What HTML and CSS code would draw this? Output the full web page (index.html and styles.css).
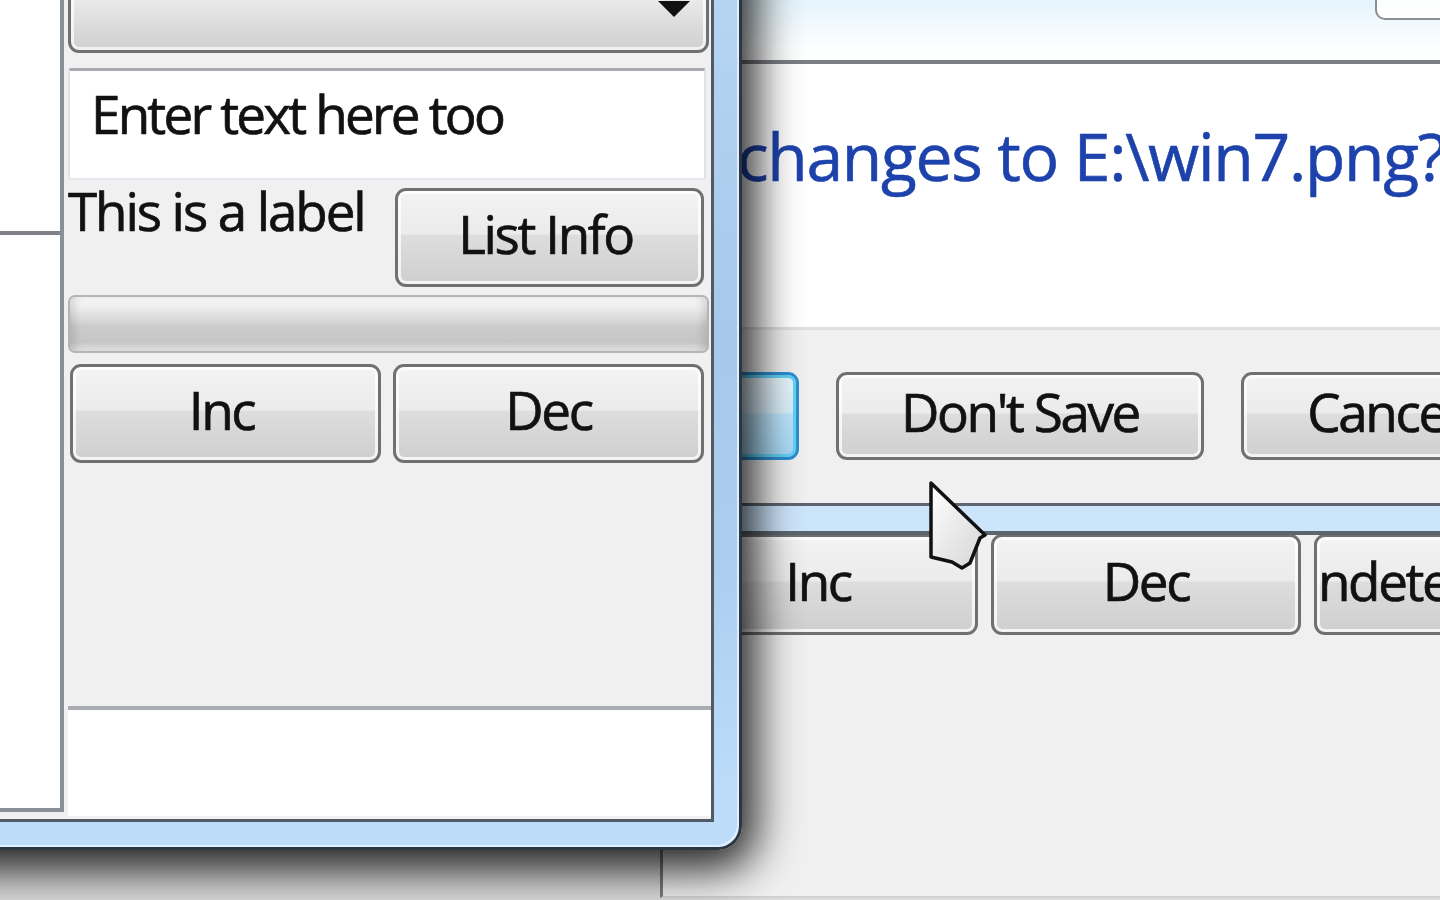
FILE: index.html
```html
<!DOCTYPE html>
<html>
<head>
<meta charset="utf-8">
<link rel="stylesheet" href="styles.css">
</head>
<body>
<div class="desktop">
  <div class="win backwin">
    <div class="btn bw-btn">Inc</div>
    <div class="btn bw-btn">Dec</div>
    <div class="btn bw-btn bw-clip">ndeterminate</div>
  </div>

  <div class="win dialog">
    <div class="dlg-title"><div class="dlg-close"></div></div>
    <div class="dlg-client">
      <div class="dlg-content"><p class="dlg-instr">changes to E:\win7.png?</p></div>
      <div class="dlg-buttons">
        <div class="btn dlg-btn btn-default"></div>
        <div class="btn dlg-btn">Don't Save</div>
        <div class="btn dlg-btn dlg-cancel">Cancel</div>
      </div>
    </div>
  </div>

  <div class="win front">
    <div class="client">
      <div class="side-panel"><div class="side-row"></div></div>
      <div class="main-panel">
        <div class="combo">
          <svg class="combo-arrow" viewBox="0 0 32 16"><polygon points="0,0 32,0 16,16" fill="#111"/></svg>
        </div>
        <div class="entry">Enter text here too</div>
        <div class="label-row">
          <span class="label">This is a label</span>
          <div class="btn">List Info</div>
        </div>
        <div class="progress"></div>
        <div class="btn-row">
          <div class="btn">Inc</div>
          <div class="btn">Dec</div>
        </div>
        <div class="spacer"></div>
        <div class="bottom-box"></div>
      </div>
    </div>
  </div>

  <svg class="cursor" viewBox="0 0 70 100">
    <defs>
      <linearGradient id="cg" x1="0" y1="0" x2="1" y2="1">
        <stop offset="0" stop-color="#ffffff"/>
        <stop offset="1" stop-color="#d4d4d4"/>
      </linearGradient>
    </defs>
    <polygon points="6,5 6,79 27,84 37,90 45,85 55,60 60,57" fill="url(#cg)" stroke="#111" stroke-width="3.5" stroke-linejoin="round"/>
  </svg>
</div>
</body>
</html>
```

FILE: styles.css
```css
html, body {
  margin: 0;
  padding: 0;
}

body {
  width: 1440px;
  height: 900px;
  overflow: hidden;
  background: #dcdcdc;
  font-family: "Open Sans", "Noto Sans", sans-serif;
}

.desktop {
  position: relative;
  width: 1440px;
  height: 900px;
  overflow: hidden;
}

.win {
  position: absolute;
  box-sizing: border-box;
}

/* ---------- generic Win7 push button ---------- */
.btn {
  box-sizing: border-box;
  display: flex;
  align-items: center;
  justify-content: center;
  padding-bottom: 8px;
  border: 3px solid #707070;
  border-radius: 11px;
  background: linear-gradient(#f3f3f3 0%, #ebebeb 46%, #dddddd 48%, #cfcfcf 100%);
  box-shadow: inset 0 0 0 3px rgba(255, 255, 255, 0.75);
  font-size: 53px;
  line-height: 60px;
  letter-spacing: -2.4px;
  color: #111;
  -webkit-text-stroke: 0.7px #111;
  white-space: nowrap;
  flex: none;
}

/* ---------- window behind the dialog ---------- */
.backwin {
  left: 660px;
  top: 440px;
  width: 800px;
  height: 458px;
  background: #f0f0f0;
  border-left: 3px solid #7c7c7c;
  border-bottom: 2px solid #d2d2d2;
  padding: 94px 0 0 5px;
  display: flex;
  align-items: flex-start;
  gap: 13px;
  z-index: 1;
}

.bw-btn {
  width: 310px;
  height: 101px;
}

.backwin .bw-btn:first-child {
  padding-right: 10px;
}

.bw-clip {
  justify-content: flex-start;
  padding-left: 1px;
  overflow: hidden;
}

/* ---------- save dialog ---------- */
.dialog {
  left: 400px;
  top: -60px;
  width: 1100px;
  height: 595px;
  background: #cde5fb;
  border-bottom: 4px solid #5c656e;
  padding-bottom: 25px;
  display: flex;
  flex-direction: column;
  z-index: 2;
}

.dlg-title {
  height: 120px;
  flex: none;
  background: linear-gradient(#d4edf9 0%, #e4f5fc 50%, #f2fafe 72%, #fcfeff 88%, #ffffff 100%);
  display: flex;
  justify-content: flex-end;
  align-items: flex-start;
}

.dlg-close {
  width: 100px;
  height: 80px;
  margin-right: 25px;
  box-sizing: border-box;
  border: 2px solid #8a8f96;
  border-top: none;
  border-radius: 0 0 10px 10px;
  background: linear-gradient(#f2f8fb, #ffffff);
}

.dlg-client {
  flex: 1;
  display: flex;
  flex-direction: column;
  border-top: 4px solid #7b7e82;
  border-bottom: 3px solid #5d6670;
  background: #f0f0f0;
}

.dlg-content {
  height: 263px;
  flex: none;
  box-sizing: border-box;
  background: #ffffff;
  padding: 51px 0 0 337px;
}

.dlg-instr {
  margin: 0;
  font-size: 66px;
  line-height: 80px;
  letter-spacing: -1.3px;
  color: #1d42ab;
  -webkit-text-stroke: 0.6px #1d42ab;
  white-space: nowrap;
}

.dlg-buttons {
  flex: 1;
  border-top: 3px solid #dfdfdf;
  padding: 42px 0 0 31px;
  display: flex;
  align-items: flex-start;
  gap: 37px;
}

.dlg-btn {
  width: 368px;
  height: 88px;
}

.dlg-cancel {
  width: 282px;
}

.btn-default {
  border-color: #2c8ed0;
  box-shadow: inset 0 0 0 3px #63d2f7;
  background: linear-gradient(#eaf6fd 0%, #d9f0fc 46%, #bee6fd 48%, #a7d9f5 100%);
}

/* ---------- front window ---------- */
.front {
  left: -40px;
  top: -70px;
  width: 782px;
  height: 920px;
  background: linear-gradient(#b8d7f4 0%, #a6c8ea 45%, #abcdee 68%, #bcdcfa 94%);
  border-right: 3px solid #2c3744;
  border-bottom: 3px solid #2c3744;
  border-bottom-right-radius: 24px;
  padding: 0 25px 25px 0;
  box-shadow: 0 6px 44px 14px rgba(0, 0, 0, 0.85), inset -2px -2px 0 #e0efff;
  z-index: 3;
}

.client {
  width: 754px;
  height: 892px;
  box-sizing: border-box;
  border-right: 3px solid #4f5b67;
  border-bottom: 3px solid #4f5b67;
  background: #f0f0f0;
  display: flex;
  align-items: flex-start;
}

.side-panel {
  width: 104px;
  height: 882px;
  flex: none;
  box-sizing: border-box;
  background: #ffffff;
  border-right: 4px solid #8a9098;
  border-bottom: 4px solid #8a9098;
}

.side-row {
  height: 305px;
  box-sizing: border-box;
  border-bottom: 4px solid #7e8288;
}

.main-panel {
  flex: 1;
  height: 889px;
  display: flex;
  flex-direction: column;
  padding-left: 4px;
}

.combo {
  margin-top: 22px;
  width: 641px;
  height: 101px;
  flex: none;
  box-sizing: border-box;
  border: 3px solid #707070;
  border-radius: 11px;
  background: linear-gradient(#f3f3f3 0%, #ebebeb 45%, #e2e2e2 62%, #d6d6d6 85%, #d0d0d0 100%);
  box-shadow: inset 0 0 0 3px rgba(255, 255, 255, 0.7);
  display: flex;
  justify-content: flex-end;
  align-items: flex-start;
}

.combo-arrow {
  margin-top: 46px;
  margin-right: 16px;
  width: 32px;
  height: 16px;
}

.entry {
  margin-top: 15px;
  width: 638px;
  height: 112px;
  flex: none;
  box-sizing: border-box;
  background: #ffffff;
  border: 2px solid #dfe3e8;
  border-top: 3px solid #a7abb1;
  border-bottom-color: #e3e9ef;
  border-radius: 3px;
  padding: 13px 0 0 21px;
  font-size: 53px;
  line-height: 60px;
  letter-spacing: -2.8px;
  color: #111;
  -webkit-text-stroke: 0.7px #111;
  white-space: nowrap;
}

.label-row {
  margin-top: 8px;
  height: 99px;
  flex: none;
  display: flex;
  justify-content: space-between;
  align-items: flex-start;
}

.label {
  margin-top: -7px;
  font-size: 53px;
  line-height: 60px;
  letter-spacing: -2.1px;
  color: #111;
  -webkit-text-stroke: 0.7px #111;
  white-space: nowrap;
}

.label-row .btn {
  width: 309px;
  height: 99px;
  margin-right: 7px;
  padding-right: 8px;
}

.progress {
  margin-top: 8px;
  width: 641px;
  height: 58px;
  flex: none;
  box-sizing: border-box;
  border: 2px solid #b4b4b4;
  border-radius: 7px;
  background: linear-gradient(#f7f7f7 0%, #ededed 20%, #dbdbdb 40%, #cbcbcb 55%, #c6c6c6 84%, #e4e4e4 100%);
  box-shadow: inset 8px 0 8px -4px rgba(0, 0, 0, 0.12), inset -8px 0 8px -4px rgba(0, 0, 0, 0.12);
}

.btn-row {
  margin-top: 11px;
  height: 99px;
  flex: none;
  display: flex;
  gap: 12px;
  padding-left: 2px;
}

.btn-row .btn {
  width: 311px;
  height: 99px;
}

.btn-row .btn:first-child {
  padding-right: 8px;
}

.spacer {
  flex: 1;
}

.bottom-box {
  height: 110px;
  margin-bottom: 3px;
  flex: none;
  box-sizing: border-box;
  background: #ffffff;
  border-top: 4px solid #a9acb1;
}

/* ---------- mouse pointer ---------- */
.cursor {
  position: absolute;
  left: 925px;
  top: 478px;
  width: 70px;
  height: 100px;
  z-index: 5;
}
```
